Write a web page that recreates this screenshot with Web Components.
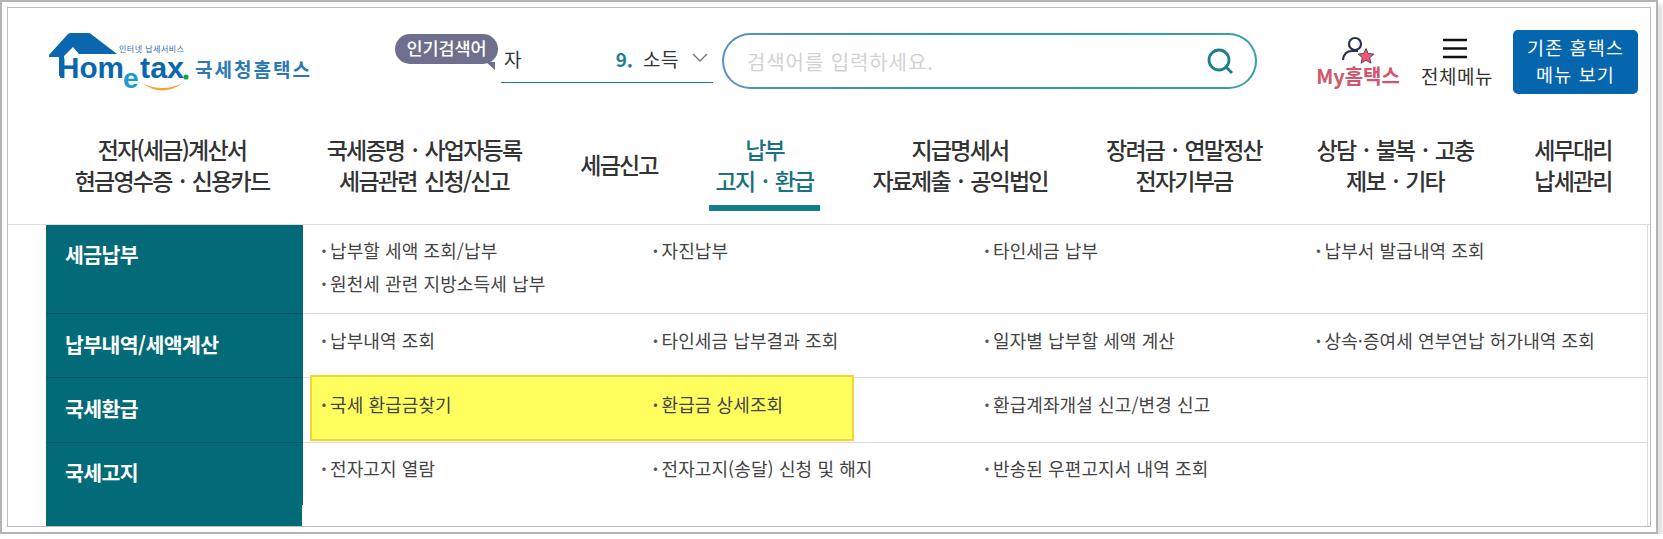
<!DOCTYPE html>
<html lang="ko">
<head>
<meta charset="utf-8">
<title>Hometax</title>
<style>
  html, body { margin: 0; padding: 0; background: #fff; }
  body { font-family: "Noto Sans CJK KR", "Noto Sans", sans-serif; color: #333; }
</style>
</head>
<body>

<hometax-frame>
  <hometax-header></hometax-header>
  <hometax-nav></hometax-nav>
  <menu-row title="세금납부" size="tall" items="납부할 세액 조회/납부|자진납부|타인세금 납부|납부서 발급내역 조회|원천세 관련 지방소득세 납부"></menu-row>
  <menu-row title="납부내역/세액계산" size="mid" items="납부내역 조회|타인세금 납부결과 조회|일자별 납부할 세액 계산|상속·증여세 연부연납 허가내역 조회"></menu-row>
  <menu-row title="국세환급" size="mark" items="국세 환급금찾기|환급금 상세조회|환급계좌개설 신고/변경 신고"></menu-row>
  <menu-row title="국세고지" size="last" items="전자고지 열람|전자고지(송달) 신청 및 해지|반송된 우편고지서 내역 조회"></menu-row>
</hometax-frame>

<script>
class HometaxFrame extends HTMLElement {
  constructor() {
    super();
    this.attachShadow({ mode: 'open' });
    this.shadowRoot.innerHTML = `
      <style>
        :host {
          display: block;
          width: 1658px;
          height: 534px;
          box-sizing: border-box;
          border: 2px solid #b4b4b4;
          box-shadow: 5px 4px 4px #e2e2e2;
          background: #fff;
          padding: 5px;
        }
        .inner {
          height: 100%;
          box-sizing: border-box;
          border: 1px solid #bcbcbc;
          display: flex;
          flex-direction: column;
          overflow: hidden;
        }
      </style>
      <div class="inner"><slot></slot></div>
    `;
  }
}

class HometaxHeader extends HTMLElement {
  constructor() {
    super();
    this.attachShadow({ mode: 'open' });
    this.shadowRoot.innerHTML = `
      <style>
        :host {
          display: flex;
          align-items: flex-start;
          height: 108px;
          flex: none;
          padding: 0 0 0 40px;
        }
        .logo { width: 270px; height: 70px; margin-top: 24px; flex: none; }
        .logo .en { font-family: "Liberation Sans", sans-serif; font-weight: 700; }
        .logo .ko { font-family: "Noto Sans CJK KR", sans-serif; }
        .badge {
          position: relative;
          margin: 26px 0 0 77px;
          width: 103px;
          height: 30px;
          flex: none;
          border-radius: 15px;
          background: #6e6f8c;
          color: #fff;
          font-size: 17.5px;
          font-weight: 500;
          line-height: 28px;
          letter-spacing: -.1px;
          text-align: center;
        }
        .badge::after {
          content: "";
          position: absolute;
          right: 3px;
          bottom: -6px;
          border-left: 9px solid transparent;
          border-top: 8px solid #6e6f8c;
        }
        .select {
          width: 212px;
          height: 46px;
          margin: 29px 0 0 3px;
          flex: none;
          box-sizing: border-box;
          border-bottom: 1px solid #167f8d;
          display: flex;
          align-items: center;
          font-size: 19px;
          color: #333;
          padding: 0 5px 3px 3px;
        }
        .select .num { margin-left: auto; font-weight: 700; color: #1f7f8f; }
        .select .lab { margin-left: 10px; letter-spacing: .5px; }
        .select svg { margin-left: 13px; }
        .search {
          width: 535px;
          height: 56px;
          margin: 25px 0 0 9px;
          flex: none;
          box-sizing: border-box;
          border: 2px solid transparent;
          border-radius: 28px;
          background:
            linear-gradient(#fff, #fff) padding-box,
            linear-gradient(90deg, #5b8fc7, #2b9aa3 40%, #3a9fa8) border-box;
          display: flex;
          align-items: center;
          padding: 0 22px 0 23px;
          color: #d2d2d2;
          font-size: 20px;
          letter-spacing: .9px;
        }
        .search svg { margin-left: auto; }
        .my, .all {
          flex: none;
          display: flex;
          flex-direction: column;
          align-items: center;
          line-height: 24px;
          margin-top: 28px;
          white-space: nowrap;
        }
        .my { width: 84px; margin-left: 59px; color: #d2556b; font-weight: 700; font-size: 20px; }
        .all { width: 80px; margin-left: 17px; color: #333; font-size: 19px; letter-spacing: .5px; }
        .my svg, .all svg { height: 30px; margin-bottom: -2px; }
        .all svg { margin-left: -4px; }
        .old {
          flex: none;
          width: 125px;
          height: 64px;
          margin: 22px 0 0 16px;
          box-sizing: border-box;
          border-radius: 5px;
          background: #0566ae;
          color: #fff;
          font-size: 18.5px;
          line-height: 27px;
          letter-spacing: 1.1px;
          text-align: center;
          padding-top: 4px;
        }
      </style>
      <svg class="logo" viewBox="0 0 270 70">
        <path d="M1 23 L20 2 Q21 1 23 1 L40 1 Q42 1 43 2 L69 22 L31 22 L25 15 L16 24 L16 44 L11 44 L11 25 L1 25 Z" fill="#0a67ae"/>
        <text class="en" x="10" y="46" font-size="29" fill="#0a67ae" textLength="66" lengthAdjust="spacingAndGlyphs">Hom</text>
        <text class="en" x="75" y="56" font-size="28" fill="#1a9bd6">e</text>
        <text class="en" x="92" y="46" font-size="29" fill="#0a67ae" textLength="44" lengthAdjust="spacingAndGlyphs">tax</text>
        <circle cx="138" cy="45" r="2.6" fill="#18a24a"/>
        <path d="M94 51 Q114 66 135 51 Q114 61 94 51 Z" fill="#f0a93b"/>
        <text class="ko" x="71" y="20" font-size="8" fill="#2f6fae" textLength="65" lengthAdjust="spacing">인터넷 납세서비스</text>
        <text class="ko" x="147" y="45" font-size="19" font-weight="700" fill="#2b78b8" textLength="115" lengthAdjust="spacing">국세청홈택스</text>
      </svg>
      <div class="badge">인기검색어</div>
      <div class="select">
        <span>자</span><span class="num">9.</span><span class="lab">소득</span>
        <svg width="16" height="10" viewBox="0 0 16 10"><path d="M1 1 L8 8 L15 1" fill="none" stroke="#777" stroke-width="1.4"/></svg>
      </div>
      <div class="search">
        <span>검색어를 입력하세요.</span>
        <svg width="26" height="26" viewBox="0 0 26 26"><circle cx="12" cy="12" r="10" fill="none" stroke="#1d7f8c" stroke-width="2.8"/><path d="M19 19 L25 25" stroke="#1d7f8c" stroke-width="2.8"/></svg>
      </div>
      <div class="my">
        <svg width="34" height="30" viewBox="0 0 34 30">
          <circle cx="14" cy="8" r="6" fill="none" stroke="#24324d" stroke-width="2.2"/>
          <path d="M2 24 Q3 15 11 15 L17 15" fill="none" stroke="#24324d" stroke-width="2.2"/>
          <path d="M25 12.5 L27.3 17.5 L32.8 18 L28.7 21.7 L30 27.2 L25 24.3 L20 27.2 L21.3 21.7 L17.2 18 L22.7 17.5 Z" fill="#ee5873" stroke="#24324d" stroke-width=".8"/>
        </svg>
        <span>My홈택스</span>
      </div>
      <div class="all">
        <svg width="26" height="30" viewBox="0 0 26 30"><path d="M1 4 H25 M1 12.5 H25 M1 21 H25" stroke="#111" stroke-width="2.6"/></svg>
        <span>전체메뉴</span>
      </div>
      <div class="old">기존 홈택스<br>메뉴 보기</div>
    `;
  }
}

class HometaxNav extends HTMLElement {
  constructor() {
    super();
    this.attachShadow({ mode: 'open' });
    // label, left gap, width
    const tabs = [
      ['전자(세금)계산서<br>현금영수증 · 신용카드', 54, 220],
      ['국세증명 · 사업자등록<br>세금관련 신청/신고', 42, 200],
      ['세금신고', 55, 80],
      ['납부<br>고지 · 환급', 50, 111],
      ['지급명세서<br>자료제출 · 공익법인', 50, 180],
      ['장려금 · 연말정산<br>전자기부금', 44, 180],
      ['상담 · 불복 · 고충<br>제보 · 기타', 41, 160],
      ['세무대리<br>납세관리', 58, 80]
    ];
    this.shadowRoot.innerHTML = `
      <style>
        :host {
          display: flex;
          height: 109px;
          flex: none;
          box-sizing: border-box;
          border-bottom: 1px solid #dcdcdc;
        }
        .tab {
          flex: none;
          height: 95px;
          box-sizing: border-box;
          display: flex;
          align-items: center;
          justify-content: center;
          text-align: center;
          font-size: 23px;
          font-weight: 500;
          line-height: 31px;
          letter-spacing: -1.8px;
          word-spacing: 3px;
          color: #333;
          white-space: nowrap;
          padding-top: 2px;
        }
        .on { color: #1a7283; border-bottom: 6px solid #117f8d; padding-top: 8px; }
      </style>
      ${tabs.map((t, i) => `<div class="tab ${i === 3 ? 'on' : ''}" style="margin-left:${t[1]}px;width:${t[2]}px">${t[0]}</div>`).join('')}
    `;
  }
}

class MenuRow extends HTMLElement {
  constructor() {
    super();
    this.attachShadow({ mode: 'open' });
  }

  connectedCallback() {
    const items = this.getAttribute('items').split('|');
    const title = this.getAttribute('title');
    const size = this.getAttribute('size');
    // height, title top, list top
    const sizes = { tall: [89, 14, 9], mid: [64, 15, 10], mark: [65, 15, 10], last: [84, 14, 9] };
    const [height, titleTop, listTop] = sizes[size];
    const fill = 'linear-gradient(#036a77, #036a77)';
    const titleBg = size === 'last'
      ? `${fill} 0 0 / 100% 62px no-repeat, ${fill} 0 0 / 256px 100% no-repeat`
      : '#036a77';
    this.shadowRoot.innerHTML = `
      <style>
        :host {
          display: grid;
          grid-template-columns: 257px 1fr;
          margin-left: 38px;
          height: ${height}px;
          flex: none;
          position: relative;
        }
        .title {
          background: ${titleBg};
          color: #fff;
          font-size: 20.5px;
          font-weight: 700;
          line-height: 30px;
          letter-spacing: -.6px;
          padding: ${titleTop}px 0 0 19px;
          box-sizing: border-box;
          border-bottom: ${size === 'last' ? 0 : '1px solid #0b5560'};
        }
        .list {
          display: grid;
          grid-template-columns: repeat(4, 331.5px);
          grid-auto-rows: 33px;
          align-content: start;
          padding: ${listTop}px 0 0 18px;
          margin-right: 5px;
          box-sizing: border-box;
          border-bottom: ${size === 'last' ? 0 : '1px solid #dcdcdc'};
          border-right: 1px solid #dcdcdc;
          font-size: 18px;
          line-height: 33px;
          color: #444;
          letter-spacing: .1px;
          white-space: nowrap;
        }
        .list span { position: relative; }
        .list span::before { content: "·"; margin-right: 3px; font-weight: 700; color: #555; }
        .mark {
          position: absolute;
          left: 264px;
          top: -3px;
          width: 544px;
          height: 66px;
          box-sizing: border-box;
          background: #ffff5e;
          border: 2px solid #f3d43a;
        }
      </style>
      <div class="title">${title}</div>
      ${size === 'mark' ? '<div class="mark"></div>' : ''}
      <div class="list">${items.map(t => `<span>${t}</span>`).join('')}</div>
    `;
  }
}

customElements.define('hometax-frame', HometaxFrame);
customElements.define('hometax-header', HometaxHeader);
customElements.define('hometax-nav', HometaxNav);
customElements.define('menu-row', MenuRow);
</script>
</body>
</html>
